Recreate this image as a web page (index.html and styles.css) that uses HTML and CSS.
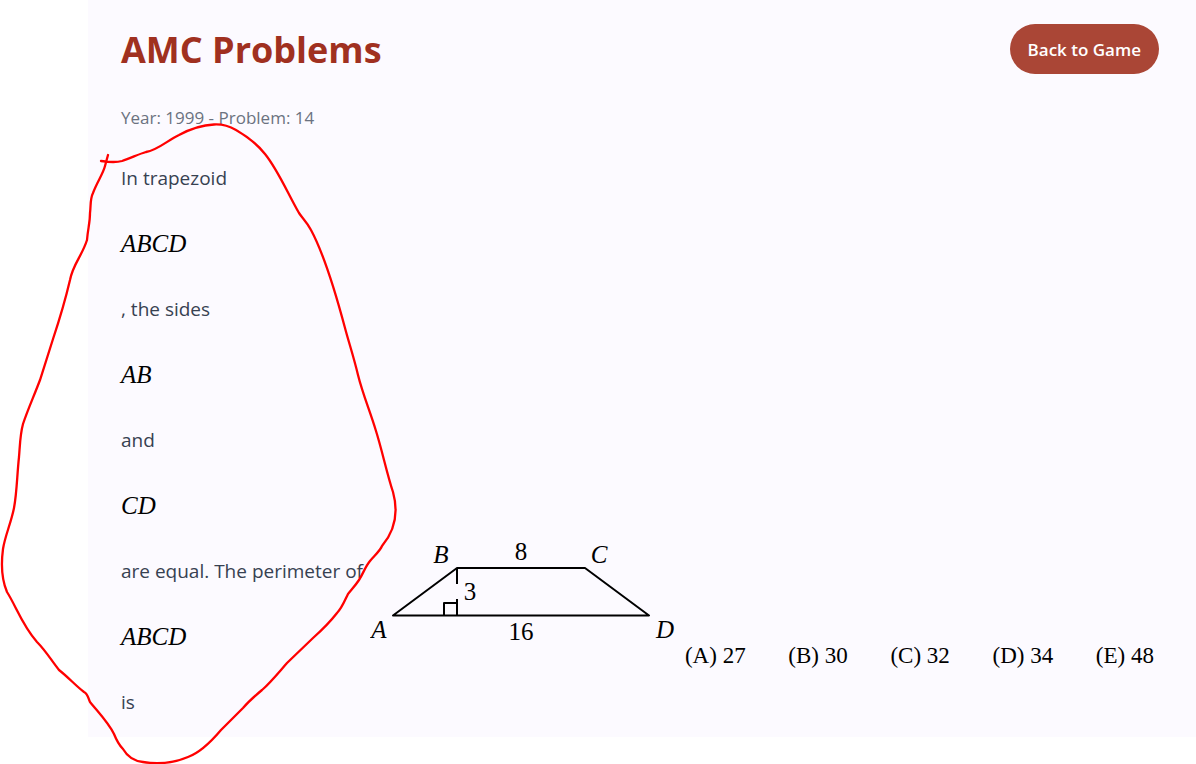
FILE: index.html
```html
<!DOCTYPE html>
<html lang="en">
<head>
<meta charset="utf-8">
<meta name="viewport" content="width=device-width, initial-scale=1">
<title>AMC Problems</title>
<link rel="stylesheet" href="styles.css">
</head>
<body>
<main class="panel">
  <header class="header">
    <h1 class="title">AMC Problems</h1>
    <button class="back" type="button">Back to Game</button>
  </header>
  <p class="meta">Year: 1999 - Problem: 14</p>
  <section class="problem">
    <div class="statement">
      <p class="words">In trapezoid</p>
      <p class="math">ABCD</p>
      <p class="words">, the sides</p>
      <p class="math">AB</p>
      <p class="words">and</p>
      <p class="math">CD</p>
      <p class="words">are equal. The perimeter of</p>
      <p class="math">ABCD</p>
      <p class="words">is</p>
    </div>
    <svg class="figure" width="306" height="112" viewBox="370 536 306 112" role="img" aria-label="Trapezoid ABCD">
      <g fill="none" stroke="#000" stroke-width="2" stroke-linejoin="round">
        <path d="M393 615.500L457 568H585L649 615.500Z"/>
        <path d="M457 568V584M457 599V615M444 615V603H457"/>
      </g>
      <g class="vertex">
        <text x="379" y="638">A</text>
        <text x="441" y="563">B</text>
        <text x="599" y="563">C</text>
        <text x="665" y="638">D</text>
      </g>
      <g class="length">
        <text x="521" y="560">8</text>
        <text x="470" y="600">3</text>
        <text x="521" y="640">16</text>
      </g>
    </svg>
    <ul class="choices">
      <li>(A) 27</li>
      <li>(B) 30</li>
      <li>(C) 32</li>
      <li>(D) 34</li>
      <li>(E) 48</li>
    </ul>
  </section>
</main>
<svg class="annotation" width="1196" height="764" viewBox="0 0 1196 764" aria-hidden="true">
  <path d="M101 161C108 162 115 163 122 161C131 158 139 154 146 152C158 150 168 140 179 135C192 128 204 125 214 124.500C222 124 229 126 236 130C248 137 258 145 265 154C278 170 288 194 299 213C303 219 307 222 311 230C325 256 337 298 345 328C349 343 354 358 358 375C363 395 370 411 376 431C382 450 387 474 393 492C398 510 397 528 382 546C380 551 374 556 370 561C365 567 363 574 359 580C355 586 352 589 348 594C345 600 342 608 337 613C330 622 322 630 313 638L287 663C279 672 271 682 262 690C256 695 249 701 243 708L221 730C210 743 199 753 188 757C176 762 161 765 143 762C134 761 127 756 123 749C118 744 116 739 114 734C108 722 98 712 90 702C88 698 88 694 84 692C76 686 68 677 59 670C51 660 46 651 37 642C22 625 16 606 7 592C2 580 1 564 3 549C5 536 11 523 14 508C17 492 17 475 19 457C20 445 20 435 23 424C28 409 34 396 40 380L53 339C60 318 66 297 70 280C73 264 82 256 87 240C88 228 90 223 90 213C91 205 90 199 93 193C97 182 103 174 105 166L108 155"/>
</svg>
</body>
</html>
```
FILE: styles.css
```css
* {
  box-sizing: border-box;
}

body {
  margin: 0;
  background: #fff;
  font-family: "Open Sans", "Noto Sans", sans-serif;
}

h1,
p,
ul {
  margin: 0;
  padding: 0;
}

.panel {
  margin-left: 88px;
  padding: 24px 37px 20px 33px;
  background: #fcfaff;
}

.header {
  display: flex;
  align-items: flex-start;
  justify-content: space-between;
}

.title {
  color: #a03020;
  font-size: 36px;
  line-height: 52px;
  font-weight: 700;
}

.back {
  height: 50px;
  padding: 0 18px;
  border: 0;
  border-radius: 25px;
  background: #aa4636;
  color: #fff;
  font-family: inherit;
  font-size: 17px;
  font-weight: 600;
}

.meta {
  margin-top: 28px;
  color: #6b7280;
  font-size: 17px;
  line-height: 28px;
}

.problem {
  display: flex;
  align-items: flex-end;
  margin-top: 31px;
}

.statement {
  display: flex;
  flex-direction: column;
  flex: none;
  gap: 36px;
}

.words {
  color: #374151;
  font-size: 19px;
  line-height: 30px;
}

.math {
  color: #000;
  font-family: "Liberation Serif", serif;
  font-size: 25px;
  font-style: italic;
  line-height: 29px;
}

.figure {
  flex: none;
  margin: 0 9px 69px 7px;
}

.vertex,
.length {
  font-family: "Liberation Serif", serif;
  font-size: 25px;
  text-anchor: middle;
}

.vertex {
  font-style: italic;
}

.choices {
  display: flex;
  flex: 1;
  justify-content: space-between;
  margin-bottom: 46px;
  padding-right: 5px;
  color: #000;
  font-family: "Liberation Serif", serif;
  font-size: 23px;
  line-height: 30px;
  list-style: none;
}

.annotation {
  position: absolute;
  top: 0;
  left: 0;
  fill: none;
  stroke: #f00;
  stroke-width: 2.3;
  stroke-linecap: round;
  pointer-events: none;
}
```
